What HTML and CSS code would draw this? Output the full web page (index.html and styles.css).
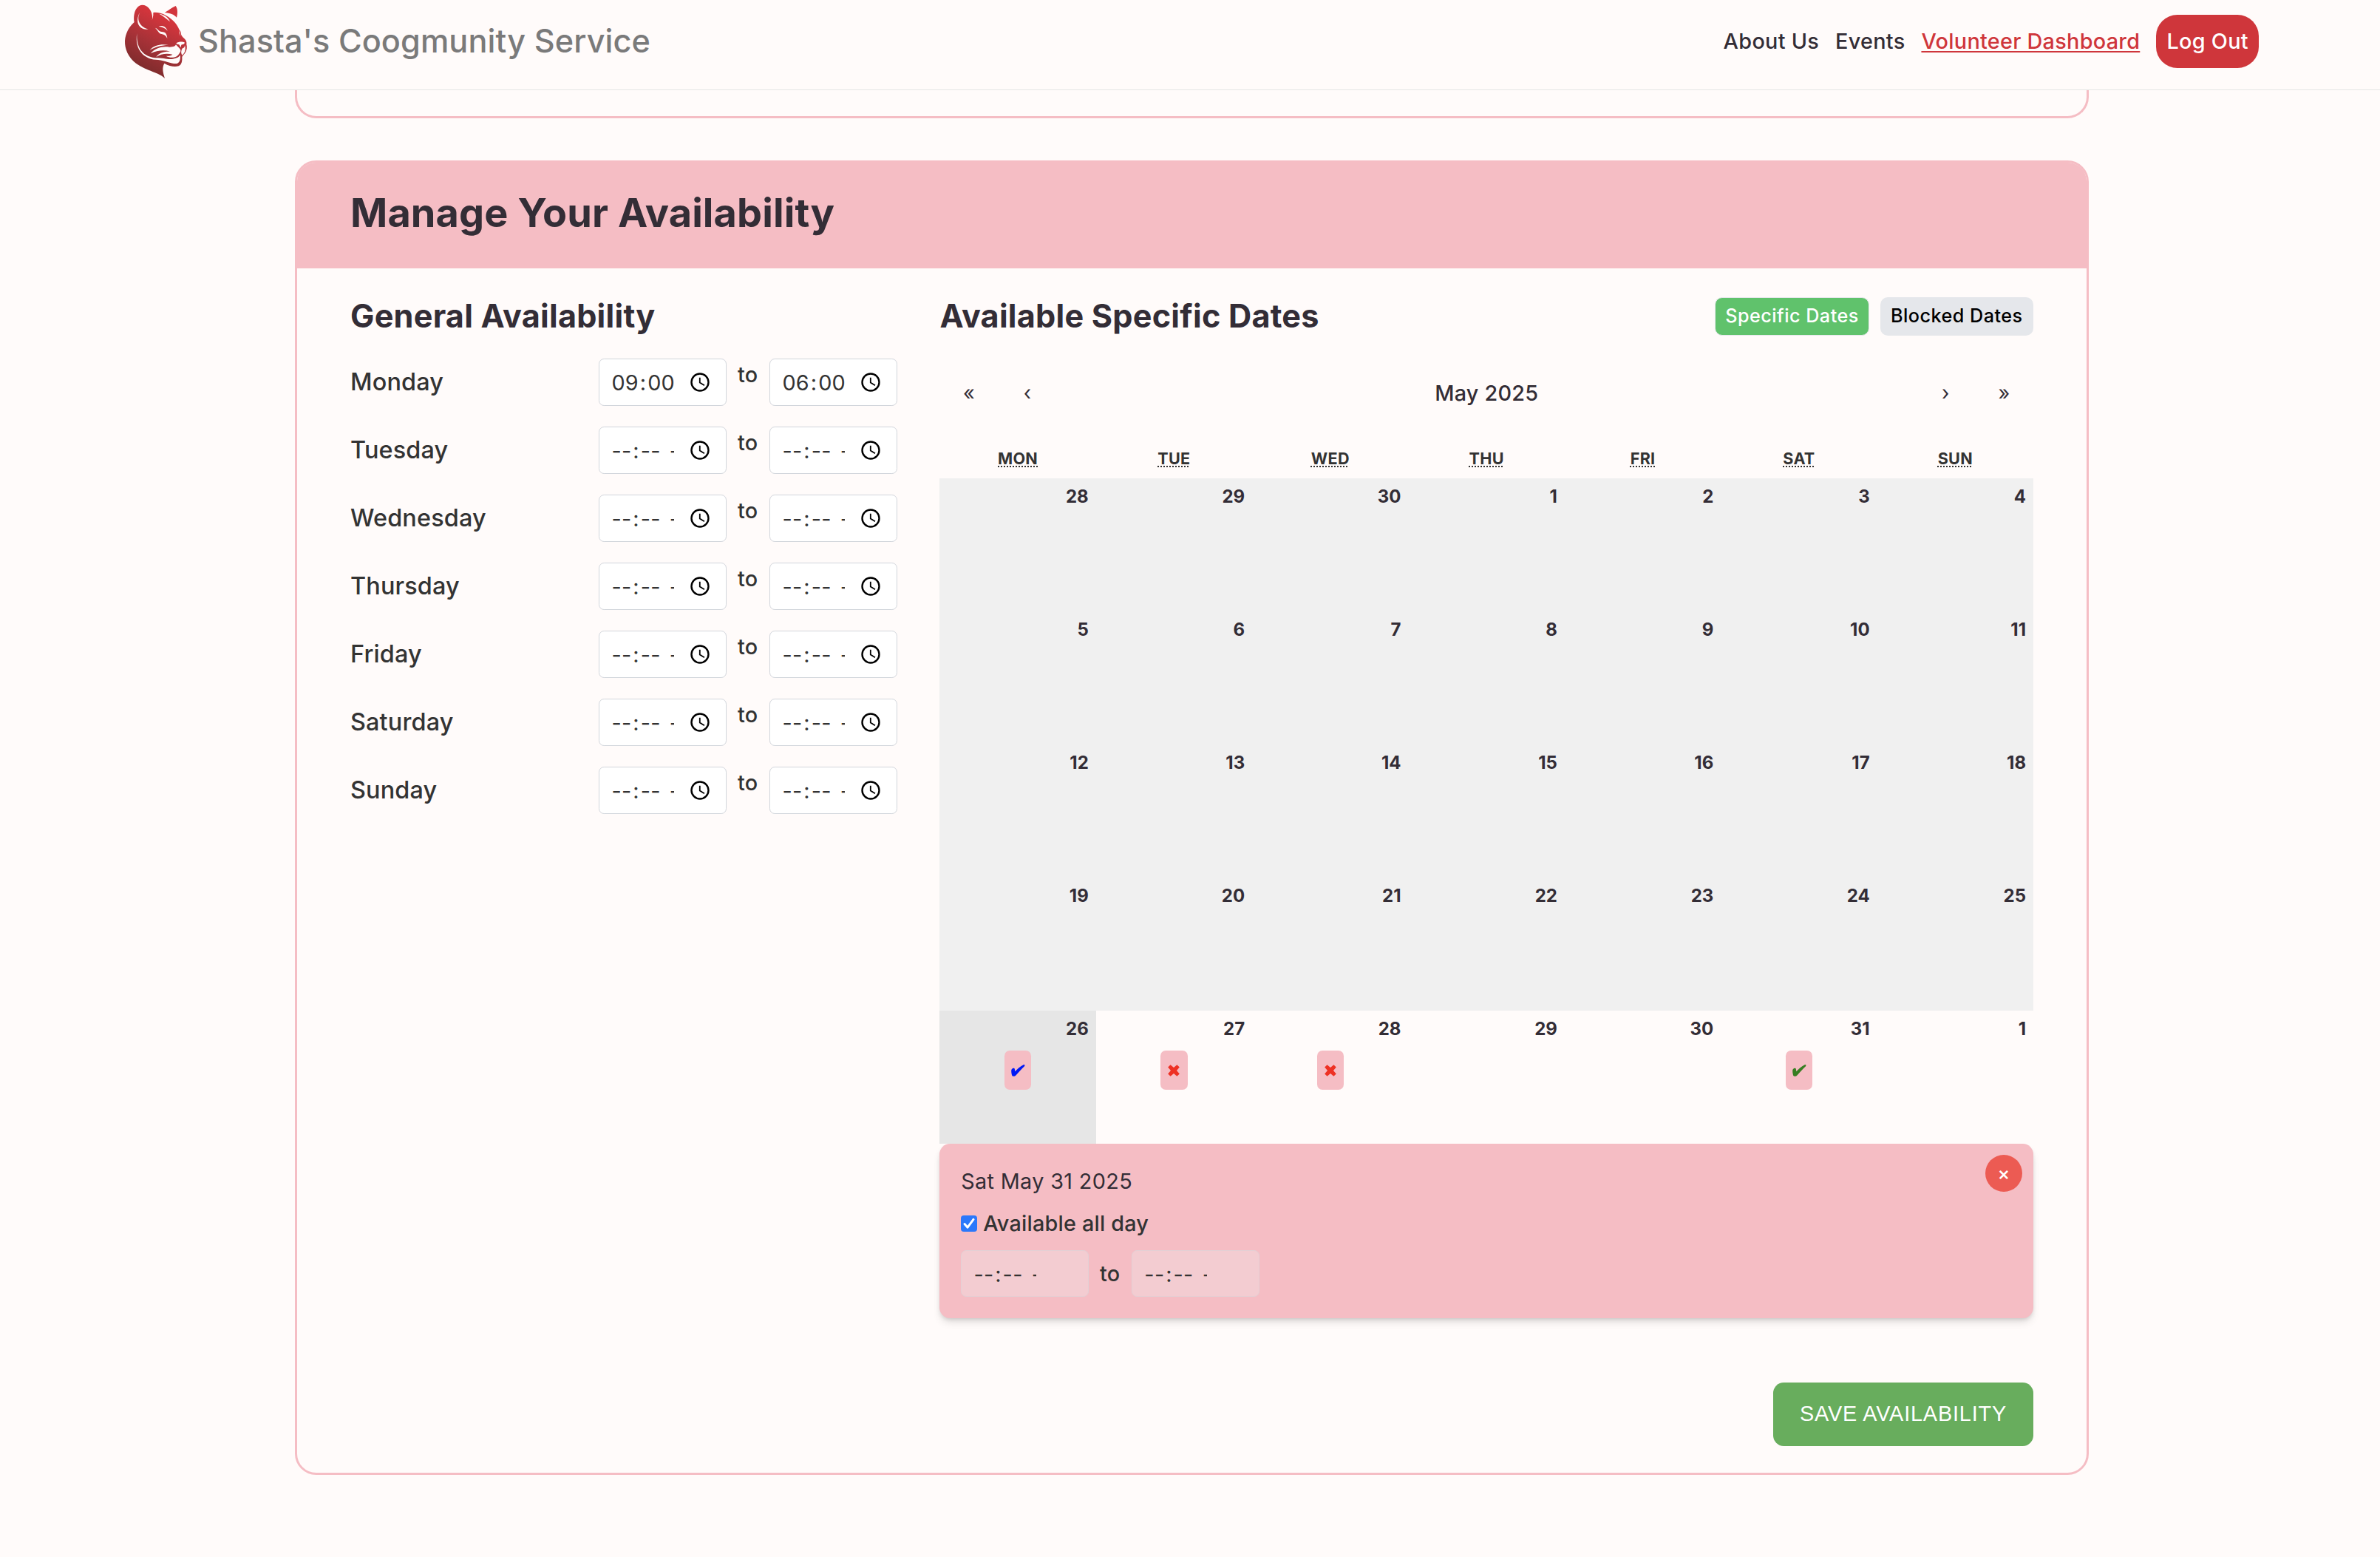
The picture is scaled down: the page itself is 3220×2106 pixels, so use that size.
FILE: index.html
```html
<!DOCTYPE html>
<html lang="en">
<head>
<meta charset="utf-8">
<title>Shasta's Coogmunity Service</title>
<link rel="stylesheet" href="styles.css">
</head>
<body>
<header class="site-header">
  <a class="brand">
    <svg class="logo" viewBox="0 0 360 330" aria-hidden="true">
      <defs>
        <linearGradient id="fur" gradientUnits="userSpaceOnUse" x1="225" y1="80" x2="120" y2="285">
          <stop offset="0" stop-color="#d2353c"/>
          <stop offset=".45" stop-color="#a93238"/>
          <stop offset="1" stop-color="#7a2b2b"/>
        </linearGradient>
      </defs>
      <path fill="url(#fur)" d="M95 87C90 54 100 20 127 17C150 17 166 40 168 62C169 71 168 77 165 82C170 73 173 62 172 48C188 46 202 50 213 54C243 68 268 92 277 116C280 122 283 122 284 130C284 139 290 147 297 152C304 158 309 166 307 178C310 186 309 200 302 211C298 218 292 222 289 228C290 244 288 260 275 265C258 269 238 266 217 254C207 272 211 290 219 315C200 292 145 285 102 254C70 230 56 196 57 163C59 130 76 103 95 87Z"/>
      <path fill="url(#fur)" d="M218 48C230 42 248 28 263 21C271 31 272 50 267 68C257 55 239 50 218 48Z"/>
      <g fill="#fffbfa">
        <path d="M119 47C105 66 109 104 152 115C138 119 120 113 112 97C105 80 109 58 119 47Z"/>
        <path d="M196 53C219 57 234 69 240 85C226 73 212 62 196 53Z"/>
        <path d="M216 49C240 56 258 74 271 97C254 76 236 63 216 49Z"/>
        <path d="M194 104C206 99 223 103 230 122C221 111 210 106 194 104Z"/>
        <path d="M180 110C192 113 193 125 207 126C219 127 227 131 229 153C223 142 217 137 206 135C193 133 192 121 180 110Z"/>
        <path d="M277 120C275 130 279 139 285 145C280 139 279 130 277 120Z"/>
        <path d="M106 132C103 180 120 224 180 232C215 232 234 240 252 236C268 234 278 228 281 220C283 236 281 251 268 255C246 257 221 243 192 240C138 240 95 202 106 132Z"/>
        <path d="M158 200C176 178 210 174 234 180C207 180 180 188 158 200Z"/>
        <path d="M161 214C180 191 211 183 238 188C254 188 262 184 264 178C272 188 284 195 283 204C276 220 268 229 252 230C243 231 232 229 224 224C236 225 245 223 250 218C225 212 203 216 184 228C195 211 215 205 240 206C215 198 187 202 161 214Z"/>
        <path d="M265 172C276 165 291 165 299 169C300 176 294 178 288 178C285 178 284 187 285 190C280 187 280 181 277 178C271 178 267 176 265 172Z"/>
        <path d="M300 180C305 194 302 213 289 221C283 211 286 199 291 193C298 191 300 187 300 180Z"/>
      </g>
    </svg>
    <span class="brand-name">Shasta's Coogmunity Service</span>
  </a>
  <nav class="site-nav">
    <a>About Us</a>
    <a>Events</a>
    <a class="current">Volunteer Dashboard</a>
    <button class="logout">Log Out</button>
  </nav>
</header>

<main class="page">
  <section class="card card-previous"></section>

  <section class="card">
    <h2 class="card-title">Manage Your Availability</h2>
    <div class="card-body">
      <div class="columns">
        <div class="general">
          <h3 class="heading">General Availability</h3>
          <div class="days" id="days"></div>
        </div>

        <div class="specific">
          <div class="specific-head">
            <h3 class="heading">Available Specific Dates</h3>
            <div class="tabs">
              <button class="tab active">Specific Dates</button>
              <button class="tab">Blocked Dates</button>
            </div>
          </div>

          <div class="cal-nav">
            <button class="arrow">«</button>
            <button class="arrow">‹</button>
            <span class="month">May 2025</span>
            <button class="arrow">›</button>
            <button class="arrow">»</button>
          </div>
          <div class="weekdays">
            <abbr>MON</abbr><abbr>TUE</abbr><abbr>WED</abbr><abbr>THU</abbr><abbr>FRI</abbr><abbr>SAT</abbr><abbr>SUN</abbr>
          </div>
          <div class="tiles" id="tiles"></div>

          <div class="detail">
            <button class="close">×</button>
            <p class="detail-date">Sat May 31 2025</p>
            <label class="all-day">
              <svg class="checkbox" viewBox="0 0 22 22"><rect width="22" height="22" rx="4" fill="#2b78fb"/><path d="M5 11.6L9.1 16.2L17 5.4" fill="none" stroke="#fff" stroke-width="3" stroke-linecap="round" stroke-linejoin="round"/></svg>
              Available all day
            </label>
            <div class="range" id="detail-range"></div>
          </div>
        </div>
      </div>
      <div class="actions"><button class="save">SAVE AVAILABILITY</button></div>
    </div>
  </section>
</main>
<script src="app.js"></script>
</body>
</html>
```
FILE: styles.css
```css
* { box-sizing: border-box; }

body {
  margin: 0;
  height: 2106px;
  overflow: hidden;
  background: #fffbfa;
  color: #333;
  font: 500 28.8px/43.2px Inter, "Liberation Sans", sans-serif;
  letter-spacing: .28px;
}

button {
  border: 0;
  padding: 0;
  background: none;
  color: inherit;
  font: inherit;
  letter-spacing: inherit;
}

h2, h3, p { margin: 0; }

/* Header */
.site-header {
  display: flex;
  justify-content: space-between;
  align-items: center;
  height: 122px;
  padding: 0 164px 9px 150px;
  border-bottom: 1px solid #e5e5e5;
}

.brand { display: flex; align-items: center; }
.logo { width: 120px; height: 110px; margin-right: -2px; }

.brand-name {
  color: #7a7a7a;
  font-size: 43.2px;
  letter-spacing: .1px;
}

.site-nav {
  display: flex;
  align-items: center;
  gap: 22px;
  color: #332d36;
}

.current {
  color: #cf363b;
  text-decoration: underline;
  text-decoration-thickness: 2px;
  text-underline-offset: 3px;
}

.logout {
  height: 72px;
  padding: 0 14.2px;
  border-radius: 28.8px;
  background: #cf363b;
  color: #fff;
}

/* Cards */
.page {
  display: flex;
  flex-direction: column;
  gap: 57px;
  width: 2427px;
  margin-left: 399px;
}

.card {
  border: 3px solid #f5bdc4;
  border-radius: 28.8px;
}

.card-previous {
  height: 38px;
  border-top: 0;
  border-radius: 0 0 28.8px 28.8px;
}

.card-title {
  height: 143px;
  padding: 27px 72px 0;
  border-radius: 25px 25px 0 0;
  background: #f5bdc4;
  color: #332d36;
  font: 700 54px/81px Inter, sans-serif;
  letter-spacing: .1px;
}

.card-body { padding: 38px 72px 36px; }

.columns {
  display: grid;
  grid-template-columns: 1fr 2fr;
  column-gap: 57.6px;
}

.heading {
  color: #332d36;
  font: 700 43.2px/52px Inter, sans-serif;
  letter-spacing: .22px;
}

/* Weekly hours */
.days {
  display: grid;
  gap: 28px;
  margin-top: 32px;
}

.day {
  display: flex;
  justify-content: space-between;
  height: 64px;
}

.day-name { font-size: 32.4px; line-height: 64px; letter-spacing: .15px; }

.range { display: flex; }
.to { width: 58.4px; padding-left: 15.2px; }

.time {
  display: flex;
  align-items: center;
  justify-content: space-between;
  width: 172.6px;
  height: 64px;
  padding: 0 22px 0 14.4px;
  border: 1px solid #d1d5db;
  border-radius: 7.2px;
  background: #fff;
  font-weight: 400;
}

.fields {
  width: 86.4px;
  padding-top: 2px;
  overflow: hidden;
  white-space: pre;
}

.fields span { padding: 0 1.8px; }
.clock { width: 26px; height: 26px; flex: none; }

/* Calendar */
.specific-head, .tabs { display: flex; justify-content: space-between; }
.tabs { gap: 14.4px; padding-top: 1px; }

.tab {
  height: 52px;
  padding: 0 14.4px;
  border-radius: 10px;
  background: #e5e7eb;
  color: #000;
  font-size: 25.2px;
  letter-spacing: .48px;
}

.tab.active {
  border: 1px solid #e5e7eb;
  padding: 0 13.4px;
  background: #60c26c;
  color: #fff;
}

.cal-nav {
  display: flex;
  height: 79px;
  margin-top: 38px;
  color: #332d36;
}

.arrow { width: 79.2px; font-size: 27px; font-weight: 400; padding-top: 1px; }
.month { flex: 1; text-align: center; line-height: 79px; letter-spacing: .2px; }

.weekdays {
  display: grid;
  grid-template-columns: repeat(7, 1fr);
  justify-items: center;
  height: 47px;
  margin-top: 29px;
  font-size: 21.6px;
  font-weight: 700;
  line-height: 40px;
}

.weekdays abbr {
  text-decoration: underline dotted;
  text-decoration-thickness: 2px;
  text-underline-offset: 2px;
}

.tiles {
  display: grid;
  grid-template-columns: repeat(7, 1fr);
  grid-auto-rows: 180px;
}

.tile {
  display: flex;
  flex-direction: column;
  align-items: center;
  padding: 7px 10px;
  color: #332d36;
  font-size: 24px;
  font-weight: 700;
  line-height: 36px;
  letter-spacing: 0;
}

.tile b { align-self: flex-end; font-weight: 700; }
.past { background: #f0f0f0; }
.today { background: #e6e6e6; }

.mark {
  display: grid;
  place-items: center;
  width: 36.5px;
  height: 53px;
  margin-top: 11px;
  border-radius: 7.2px;
  background: #f5bdc4;
}

.mark svg { width: 20px; height: 20px; }
.blue { color: #0018f5; }
.red { color: #ee3124; }
.green { color: #377e22; }

/* Selected date */
.detail {
  position: relative;
  height: 236px;
  padding: 28.8px;
  border-radius: 14.4px;
  background: #f5bdc4;
  box-shadow: 0 7.2px 10.8px -1.8px rgba(0, 0, 0, .1), 0 3.6px 7.2px -3.6px rgba(0, 0, 0, .2);
}

.detail-date { color: #332d36; font-weight: 400; letter-spacing: .35px; }

.all-day {
  display: flex;
  align-items: center;
  gap: 8px;
  margin: 14.4px 0;
  letter-spacing: .2px;
}

.checkbox { width: 22px; height: 22px; }

.detail .range { align-items: center; }

.detail .time {
  height: 63px;
  border-color: #e3d0d5;
  background: #f3ccd1;
}

.close {
  position: absolute;
  top: 14.8px;
  right: 14.8px;
  width: 50.4px;
  height: 50.4px;
  padding-top: 2px;
  border-radius: 50%;
  background: #ec5b53;
  color: #fff;
  font-size: 25.2px;
}

.actions {
  display: flex;
  justify-content: flex-end;
  margin-top: 87px;
}

.save {
  width: 352px;
  height: 86px;
  border-radius: 14.4px;
  background: #68ad5d;
  color: #fff;
  font: 400 28.8px/43.2px "Liberation Sans", sans-serif;
  letter-spacing: .84px;
}
```
FILE: app.js
```js
const clock = '<svg class="clock" viewBox="0 0 26 26" fill="none" stroke="#000"><circle cx="13" cy="13" r="11.5" stroke-width="2.4"/><path d="M12.8 6.8V13.6L19 17.2" stroke-width="1.8"/></svg>';

const time = (h, m, withClock) =>
  `<div class="time"><div class="fields"><span>${h}</span>:<span>${m}</span> <span>--</span></div>${withClock ? clock : ''}</div>`;

const range = (from, to, withClock = true) =>
  time(...from, withClock) + '<span class="to">to</span>' + time(...to, withClock);

const blank = ['--', '--'];
const hours = { Monday: [['09', '00'], ['06', '00']] };
const names = ['Monday', 'Tuesday', 'Wednesday', 'Thursday', 'Friday', 'Saturday', 'Sunday'];

document.getElementById('days').innerHTML = names.map(name => {
  const [from, to] = hours[name] || [blank, blank];
  return `<div class="day"><span class="day-name">${name}</span><div class="range">${range(from, to)}</div></div>`;
}).join('');

document.getElementById('detail-range').innerHTML = range(blank, blank, false);

const check = '<svg viewBox="0 0 20 20"><path fill="currentColor" d="M1.2 10.2C1.2 7 5.4 5.6 5.9 8.2L6.3 11.3C9 8.2 13 4.6 17.6 2.2C19.4 1.8 20 2.8 19 4.2C15.4 7.4 10.8 12.6 7.4 16.6C6 18.2 2.8 18.4 2 16.2C1.4 14 1.2 12 1.2 10.2Z"/></svg>';
const cross = '<svg viewBox="0 0 20 20"><path fill="currentColor" d="M5.6 2.2L10 6L14.4 2.2L17.8 5.6L14 10L17.8 14.4L14.4 17.8L10 14L5.6 17.8L2.2 14.4L6 10L2.2 5.6Z"/></svg>';
const marks = { 28: ['blue', check], 29: ['red', cross], 30: ['red', cross], 33: ['green', check] };

let tiles = '';
for (let i = 0; i < 35; i++) {
  const day = new Date(2025, 3, 28 + i).getDate();
  const state = i < 28 ? ' past' : i === 28 ? ' today' : '';
  const mark = marks[i] ? `<span class="mark ${marks[i][0]}">${marks[i][1]}</span>` : '';
  tiles += `<div class="tile${state}"><b>${day}</b>${mark}</div>`;
}
document.getElementById('tiles').innerHTML = tiles;
```
